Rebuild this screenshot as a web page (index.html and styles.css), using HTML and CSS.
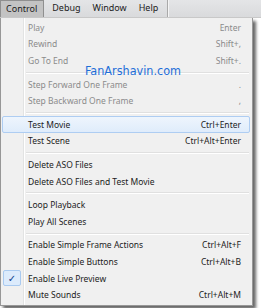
FILE: index.html
```html
<!DOCTYPE html>
<html lang="en">

<head>
    <meta charset="UTF-8">
    <title>Control menu</title>
    <link rel="stylesheet" href="styles.css">
</head>

<body>
    <div class="menubar">
        <div class="bar_item on">Control</div>
        <div class="bar_item">Debug</div>
        <div class="bar_item">Window</div>
        <div class="bar_item">Help</div>
        <div class="bar_rest"></div>
    </div>

    <div class="menu">
        <div class="row off"><span class="mark"></span><span class="label">Play</span><span class="key">Enter</span></div>
        <div class="row off"><span class="mark"></span><span class="label">Rewind</span><span class="key">Shift+,</span></div>
        <div class="row off"><span class="mark"></span><span class="label">Go To End</span><span class="key">Shift+.</span></div>
        <div class="sep"></div>
        <div class="row off"><span class="mark"></span><span class="label">Step Forward One Frame</span><span class="key">.</span></div>
        <div class="row off"><span class="mark"></span><span class="label">Step Backward One Frame</span><span class="key">,</span></div>
        <div class="sep"></div>
        <div class="row hover"><span class="mark"></span><span class="label">Test Movie</span><span class="key">Ctrl+Enter</span></div>
        <div class="row"><span class="mark"></span><span class="label">Test Scene</span><span class="key">Ctrl+Alt+Enter</span></div>
        <div class="sep"></div>
        <div class="row"><span class="mark"></span><span class="label">Delete ASO Files</span><span class="key"></span></div>
        <div class="row"><span class="mark"></span><span class="label">Delete ASO Files and Test Movie</span><span class="key"></span></div>
        <div class="sep"></div>
        <div class="row"><span class="mark"></span><span class="label">Loop Playback</span><span class="key"></span></div>
        <div class="row"><span class="mark"></span><span class="label">Play All Scenes</span><span class="key"></span></div>
        <div class="sep"></div>
        <div class="row"><span class="mark"></span><span class="label">Enable Simple Frame Actions</span><span class="key">Ctrl+Alt+F</span></div>
        <div class="row"><span class="mark"></span><span class="label">Enable Simple Buttons</span><span class="key">Ctrl+Alt+B</span></div>
        <div class="row"><span class="mark checked">&#10003;</span><span class="label">Enable Live Preview</span><span class="key"></span></div>
        <div class="row"><span class="mark"></span><span class="label">Mute Sounds</span><span class="key">Ctrl+Alt+M</span></div>

        <div class="watermark">FanArshavin.com</div>
    </div>
</body>

</html>
```

FILE: styles.css
```css
* {
    padding: 0;
    margin: 0;
    box-sizing: border-box;
}

body {
    background: #fff;
    font-family: "Noto Sans", "DejaVu Sans", sans-serif;
    font-size: 8.5px;
    color: #1c1c1c;
    width: 261px;
    height: 308px;
    overflow: hidden;
}

.menubar {
    display: flex;
    height: 18px;
    background: linear-gradient(#e4e5e7, #d9dadc);
    border-bottom: 1px solid #c9c9c9;
}

.bar_item {
    height: 17px;
    line-height: 16px;
    padding: 0 6px 0 6px;
    font-size: 9px;
    color: #1c1c1c;
}

.bar_item.on {
    background: #c3c3c3;
    border: 1px solid #8f8f8f;
    border-bottom: none;
    padding: 0 6px 0 5px;
    margin-right: 2px;
}

.bar_rest {
    flex: 1;
    margin-left: 3px;
    border-left: 1px solid #a9a9a9;
    box-shadow: inset 1px 0 0 #f4f4f4;
}

.menu {
    position: relative;
    width: 253px;
    padding: 1px 0 2px;
    border: 1px solid #979797;
    border-top: none;
    background: linear-gradient(to right, #f0f0f0 22px, #e2e3e3 22px, #e2e3e3 23px, #fff 23px, #fff 24px, #f0f0f0 24px);
    box-shadow: 3px 3px 3px rgba(0, 0, 0, 0.6);
}

.row {
    display: flex;
    align-items: center;
    height: 16.6px;
    margin: 0 2px 0 1px;
    padding-right: 8px;
    border: 1px solid transparent;
    border-radius: 2px;
}

.row.off {
    color: #8b8b8b;
}

.row.hover {
    background: linear-gradient(#eef5fd, #dfecfb);
    border-color: #aecdf2;
}

.mark {
    width: 18px;
    height: 16px;
    margin-right: 7px;
    text-align: center;
    line-height: 15px;
}

.mark.checked {
    background: #dcebfc;
    border: 1px solid #a9caf0;
    border-radius: 2px;
    color: #0f3f8f;
    font-family: "DejaVu Sans", sans-serif;
    font-size: 10px;
}

.label {
    flex: 1;
    white-space: nowrap;
}

.key {
    white-space: nowrap;
}

.sep {
    height: 7px;
    margin-left: 25px;
    margin-right: 3px;
    padding-top: 3px;
}

.sep:after {
    content: '';
    display: block;
    border-top: 1px solid #e0e0e0;
    border-bottom: 1px solid #fff;
}

.watermark {
    position: absolute;
    left: 84px;
    top: 45px;
    font-family: "DejaVu Sans", sans-serif;
    font-stretch: condensed;
    font-size: 12.5px;
    color: #1f6fd8;
}
```
